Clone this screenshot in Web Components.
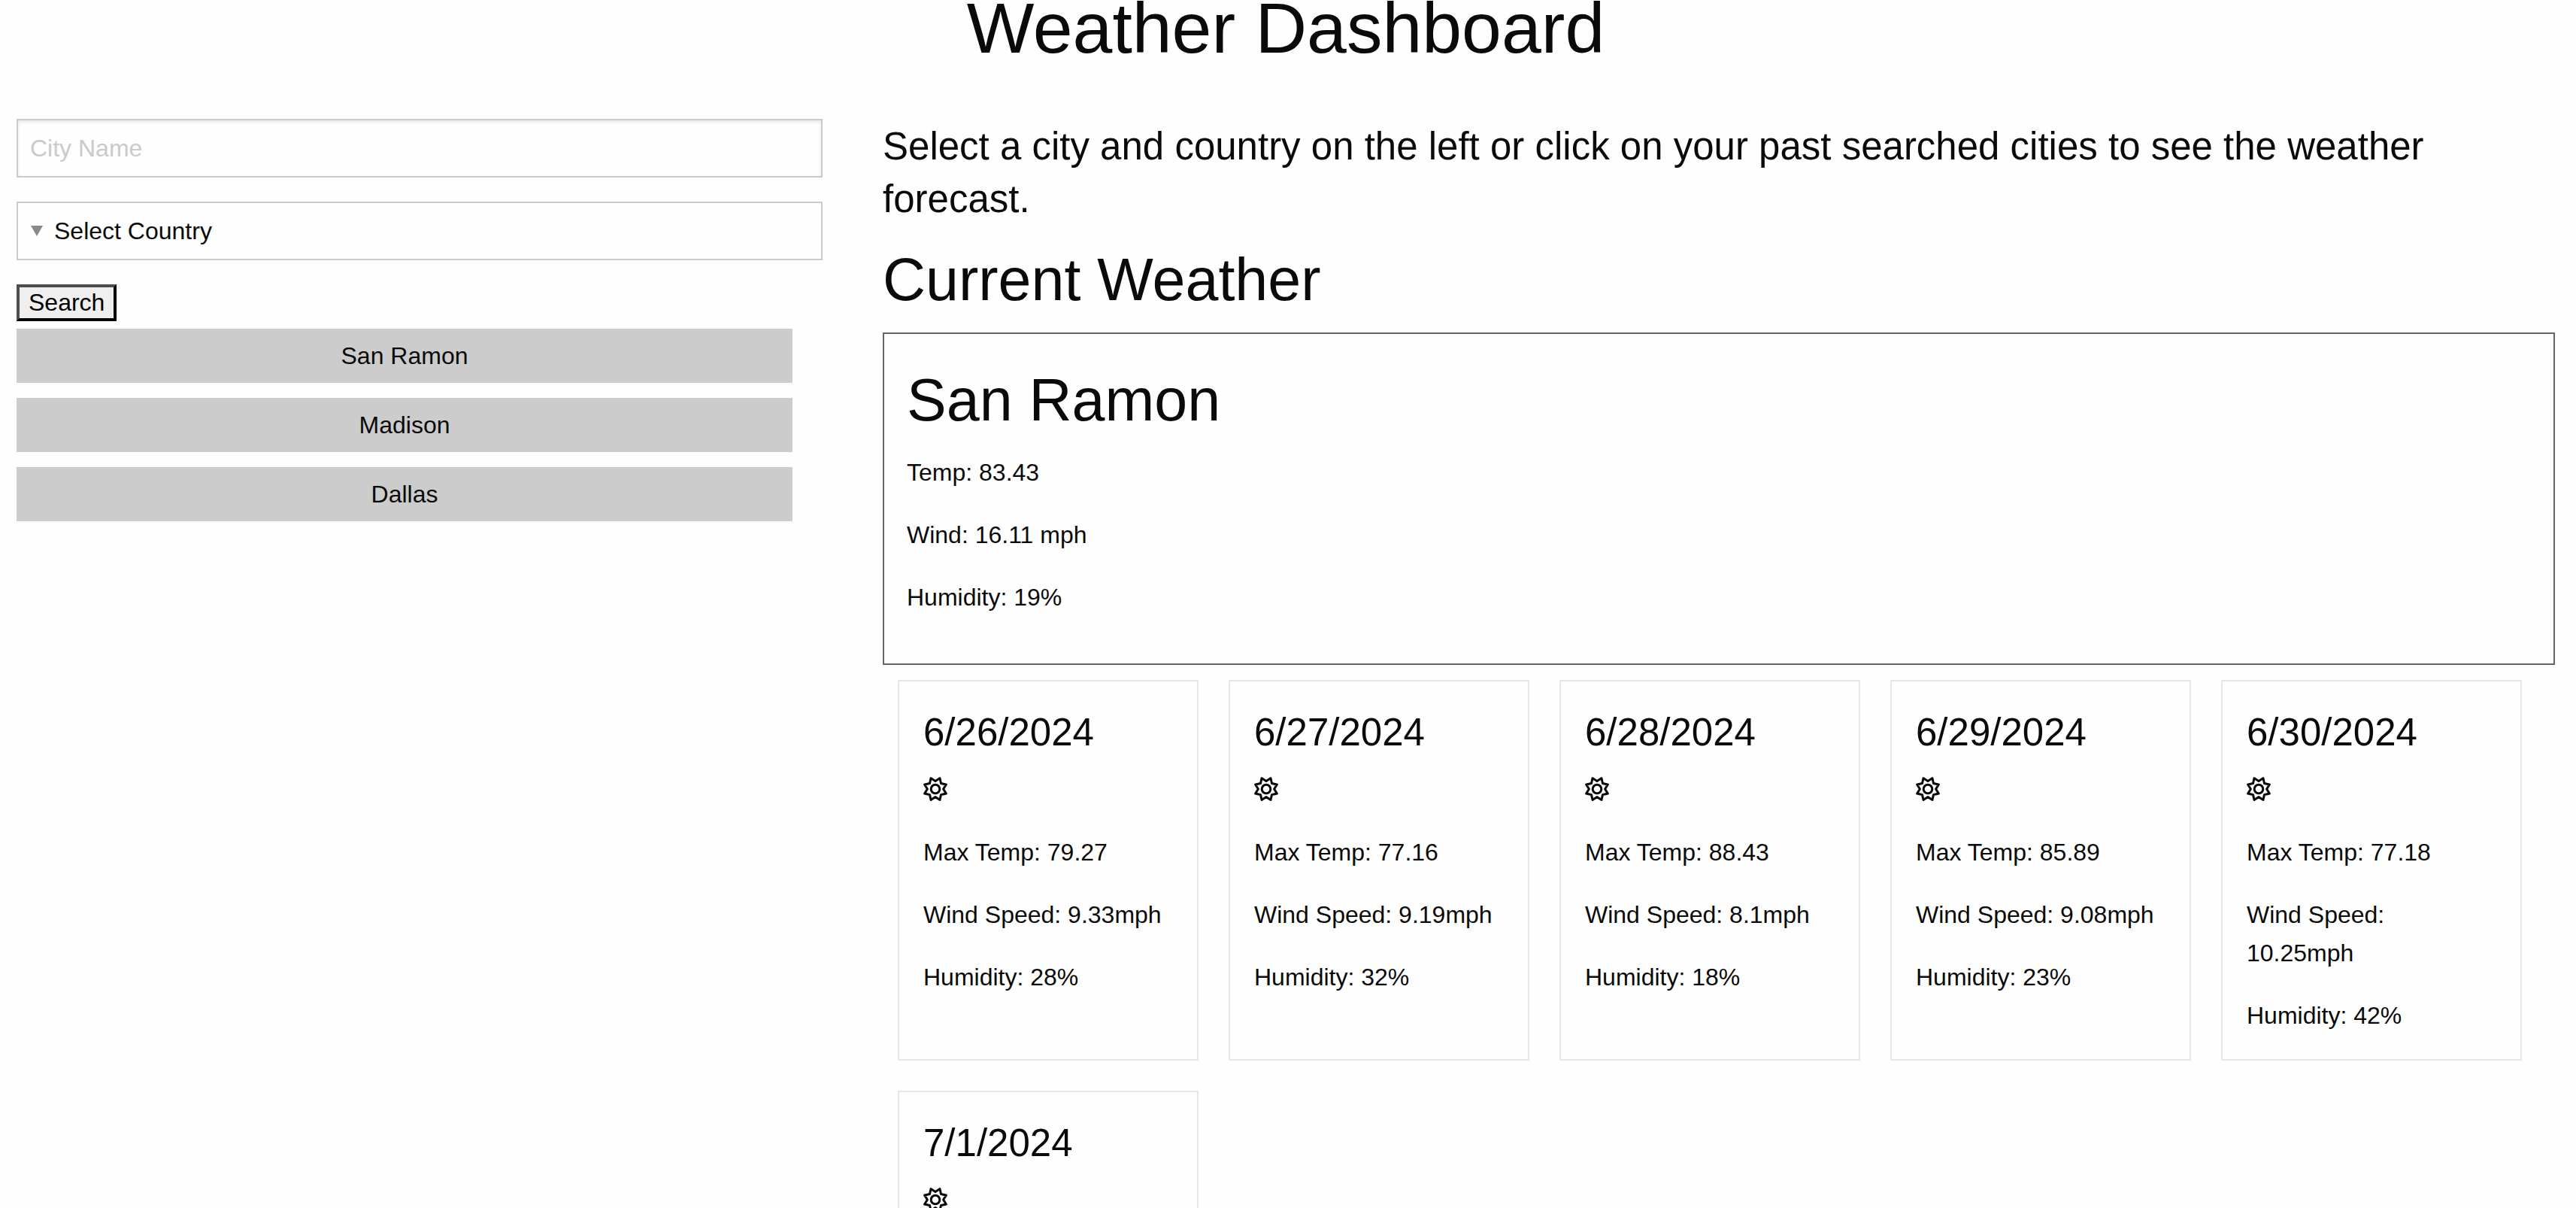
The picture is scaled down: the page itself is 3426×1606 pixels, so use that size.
<!DOCTYPE html>
<html lang="en">
<head>
<meta charset="utf-8">
<title>Weather Dashboard</title>
<style>
  body {
    margin: 0;
    background: #fefefe;
    color: #0a0a0a;
    font-family: "Liberation Sans", Arial, sans-serif;
    font-size: 32px;
    line-height: 51px;
  }
</style>
</head>
<body>
<weather-app></weather-app>
<script>
  const define = (name, html, init) => {
    const template = document.createElement('template');
    template.innerHTML = html;
    customElements.define(name, class extends HTMLElement {
      constructor() {
        super();
        this.attachShadow({ mode: 'open' }).append(template.content.cloneNode(true));
      }
      connectedCallback() {
        if (init) init(this, this.shadowRoot);
      }
    });
  };

  define('sun-icon', `
    <style>
      :host { display: block; width: 32px; height: 32px; }
      svg { display: block; width: 100%; height: 100%; overflow: visible; }
    </style>
    <svg viewBox="-16 -16 32 32" fill="none" stroke="currentColor" aria-hidden="true">
      <path stroke-width="3" stroke-linejoin="round"></path>
      <circle r="5.8" stroke-width="3"></circle>
    </svg>`, (host, root) => {
    // Eight-rayed outline: tips sit either side of each axis, notches on the axes.
    const points = [];
    for (let i = 0; i < 16; i++) {
      const a = i * Math.PI / 8;
      const r = i % 2 ? 15.6 : 10.6;
      points.push((r * Math.sin(a)).toFixed(2) + ' ' + (-r * Math.cos(a)).toFixed(2));
    }
    root.querySelector('path').setAttribute('d', 'M' + points.join('L') + 'Z');
  });

  define('past-city', `
    <style>
      :host { display: block; }
      button {
        display: block; width: 100%; margin: 0; padding: 10px; border: 0;
        background: #ccc; color: inherit; font: inherit; line-height: 52px;
        text-align: center; cursor: pointer;
      }
    </style>
    <button type="button"><slot></slot></button>`);

  define('city-search', `
    <style>
      :host { display: block; }
      form { display: flex; flex-direction: column; align-items: flex-start; gap: 32px; }
      input, select {
        box-sizing: border-box; width: 100%; height: 78px; margin: 0; padding: 0 16px;
        border: 2px solid #cacaca; border-radius: 0; background: #fefefe;
        color: inherit; font: inherit;
      }
      input { box-shadow: inset 0 2px 4px rgba(10, 10, 10, .1); }
      input::placeholder { color: #cacaca; opacity: 1; }
      .picker { display: grid; align-items: center; width: 100%; }
      .picker > * { grid-area: 1 / 1; }
      select { appearance: none; padding-left: 48px; }
      svg { width: 16px; height: 14px; margin-left: 19px; pointer-events: none; }
      button {
        padding: 2px 12px; border: 4px solid; border-color: #4d4d4d #000 #000 #4d4d4d;
        border-radius: 0; background: #efefef; color: #000; font: inherit; line-height: 37px;
      }
    </style>
    <form onsubmit="return false">
      <input type="text" placeholder="City Name" aria-label="City Name">
      <div class="picker">
        <select aria-label="Country"><option>Select Country</option></select>
        <svg viewBox="0 0 16 14" aria-hidden="true"><path d="M0 0H16L8 14Z" fill="#8a8a8a"/></svg>
      </div>
      <button type="submit">Search</button>
    </form>`);

  define('current-weather', `
    <style>
      :host { display: block; padding: 32px 30px 30px; border: 2px solid #666; }
      h2 { margin: 0 0 15px; font-size: 79px; font-weight: 400; line-height: 112px; }
      ::slotted(p) { margin: 0 0 32px; }
    </style>
    <h2><slot name="city"></slot></h2>
    <slot></slot>`);

  define('day-card', `
    <style>
      :host {
        display: block; box-sizing: border-box; padding: 32px; border: 2px solid #e6e6e6;
      }
      h4 { margin: 0 0 14px; padding-top: 1px; font-size: 51px; font-weight: 400; line-height: 70px; }
      .icon { display: flex; align-items: center; height: 52px; }
      ::slotted(p) { margin: 32px 0 0; }
      .icon + slot { display: block; padding-top: 1px; }
    </style>
    <h4><slot name="date"></slot></h4>
    <div class="icon"><sun-icon></sun-icon></div>
    <slot></slot>`);

  define('weather-app', `
    <style>
      :host { display: block; }
      h1 {
        margin: 0; padding: 0 28px 0 22px; font-size: 95px; font-weight: 400;
        line-height: 74px; text-align: center;
      }
      .columns { display: grid; grid-template-columns: 1fr 2fr; margin-top: 84px; }
      aside { padding: 0 48px 0 22px; }
      main { min-width: 0; padding: 2px 28px 0 32px; }
      .history { display: flex; flex-direction: column; gap: 20px; margin: 10px 40px 0 0; }
      .lead { margin: 0 0 16px; font-size: 51px; line-height: 70px; }
      h2 { margin: 0 0 14px; font-size: 79px; font-weight: 400; line-height: 112px; }
      .forecast {
        display: grid; grid-template-columns: repeat(auto-fill, 400px);
        gap: 40px; padding: 20px;
      }
    </style>
    <h1>Weather Dashboard</h1>
    <div class="columns">
      <aside>
        <city-search></city-search>
        <div class="history">
          <past-city>San Ramon</past-city>
          <past-city>Madison</past-city>
          <past-city>Dallas</past-city>
        </div>
      </aside>
      <main>
        <p class="lead">Select a city and country on the left or click on your past searched cities to see the weather forecast.</p>
        <h2>Current Weather</h2>
        <current-weather>
          <span slot="city">San Ramon</span>
          <p>Temp: 83.43</p>
          <p>Wind: 16.11 mph</p>
          <p>Humidity: 19%</p>
        </current-weather>
        <div class="forecast">
          <day-card>
            <span slot="date">6/26/2024</span>
            <p>Max Temp: 79.27</p>
            <p>Wind Speed: 9.33mph</p>
            <p>Humidity: 28%</p>
          </day-card>
          <day-card>
            <span slot="date">6/27/2024</span>
            <p>Max Temp: 77.16</p>
            <p>Wind Speed: 9.19mph</p>
            <p>Humidity: 32%</p>
          </day-card>
          <day-card>
            <span slot="date">6/28/2024</span>
            <p>Max Temp: 88.43</p>
            <p>Wind Speed: 8.1mph</p>
            <p>Humidity: 18%</p>
          </day-card>
          <day-card>
            <span slot="date">6/29/2024</span>
            <p>Max Temp: 85.89</p>
            <p>Wind Speed: 9.08mph</p>
            <p>Humidity: 23%</p>
          </day-card>
          <day-card>
            <span slot="date">6/30/2024</span>
            <p>Max Temp: 77.18</p>
            <p>Wind Speed: 10.25mph</p>
            <p>Humidity: 42%</p>
          </day-card>
          <day-card>
            <span slot="date">7/1/2024</span>
          </day-card>
        </div>
      </main>
    </div>`);
</script>
</body>
</html>
